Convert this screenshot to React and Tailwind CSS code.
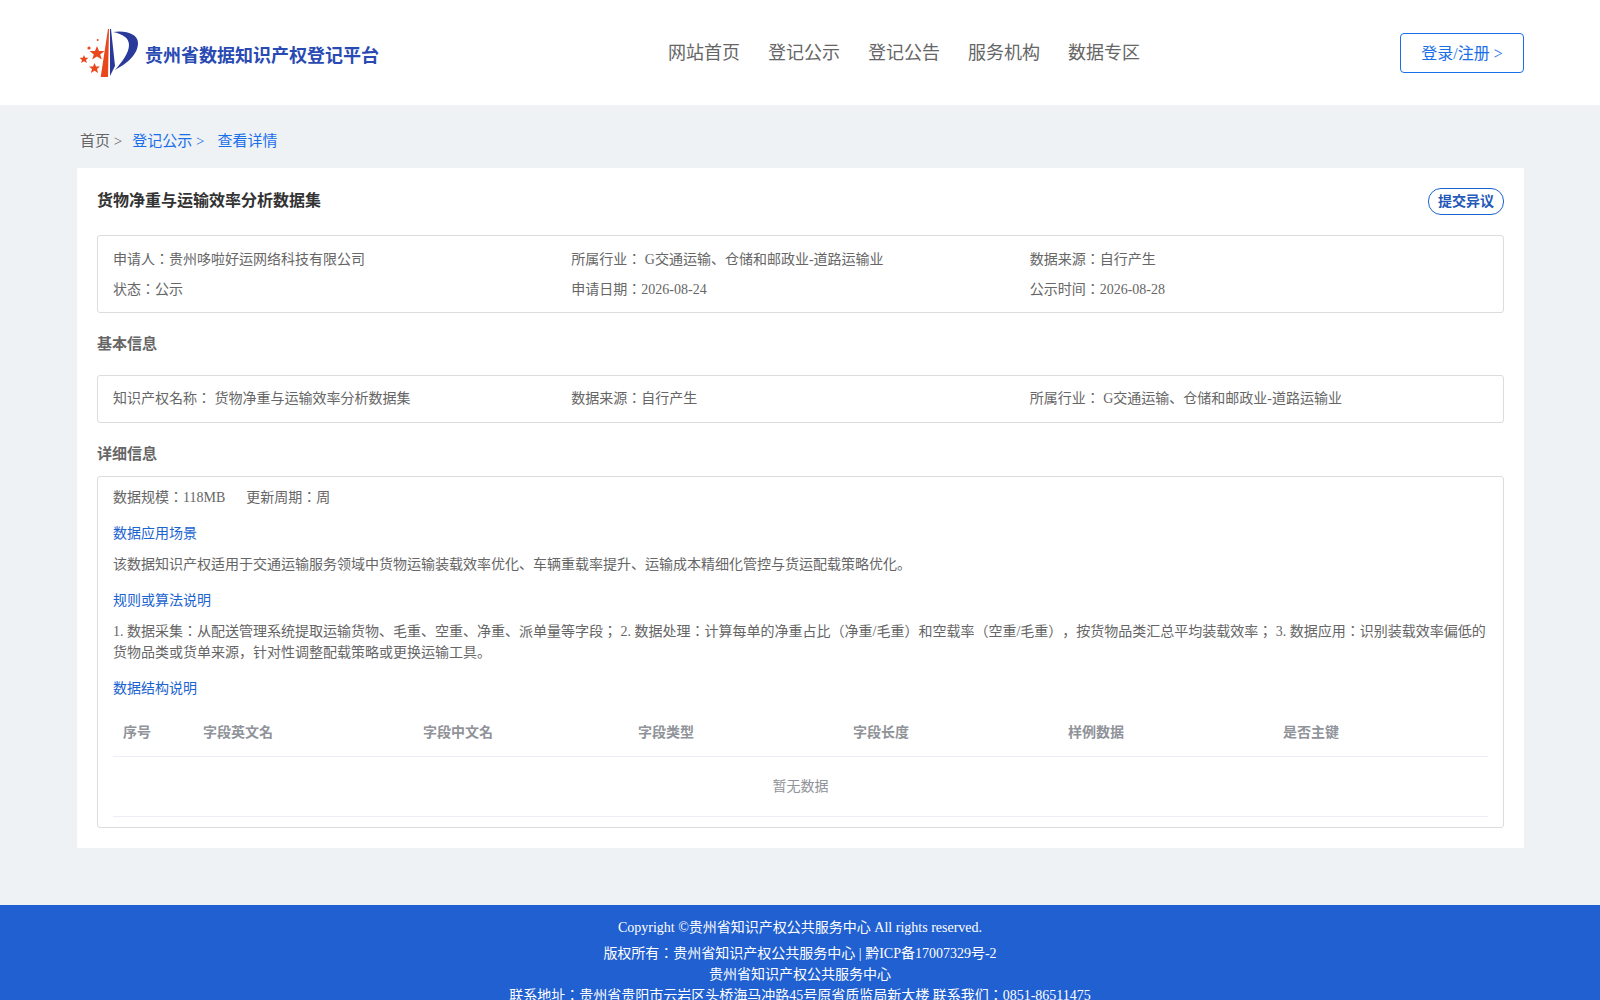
const columns = [
  { label: "序号", width: "w-[80px]" },
  { label: "字段英文名", width: "w-[220px]" },
  { label: "字段中文名", width: "w-[215px]" },
  { label: "字段类型", width: "w-[215px]" },
  { label: "字段长度", width: "w-[215px]" },
  { label: "样例数据", width: "w-[215px]" },
  { label: "是否主键", width: "w-[215px]" },
];

function Logo() {
  return (
    <svg width="58" height="50" viewBox="0 0 58 50" className="shrink-0">
      <path d="M20.7 49 L28 1 L29 1 L28 49 Z" fill="#e8481c" />
      <path d="M30 1 L31 1 L35 38 L30 48 Z" fill="#2a3a9a" />
      <path d="M33 4 C46 2 58 6 58 15 C58 27 46 36 35 42 C42 34 49 25 49 17 C49 10 43 6 33 4 Z" fill="#2a3a9a" />
      <path d="M17 18 L19 23 L24.5 23 L20.2 26.4 L21.8 31.5 L17 28.6 L12.2 31.5 L13.8 26.4 L9.5 23 L15 23 Z" fill="#e8481c" />
      <path d="M4 27 L5.2 29.8 L8.4 29.8 L6 31.9 L6.9 35 L4 33.2 L1.1 35 L2 31.9 L-0.4 29.8 L2.8 29.8 Z" fill="#e8481c" />
      <path d="M14.5 35 L16 38.5 L20 38.5 L17 41 L18.1 45 L14.5 42.7 L10.9 45 L12 41 L9 38.5 L13 38.5 Z" fill="#e8481c" />
      <circle cx="9" cy="20" r="1.6" fill="#e8481c" />
      <circle cx="17.7" cy="12" r="1" fill="#e8481c" />
    </svg>
  );
}

function Header() {
  return (
    <header className="flex h-[105px] items-center bg-white pl-[80px] pr-[76px]">
      <div className="flex w-[400px] items-center gap-[7px]">
        <Logo />
        <span className="pt-[7px] text-[18px] font-bold text-[#2a4ab3]">贵州省数据知识产权登记平台</span>
      </div>
      <nav className="ml-[188px] flex gap-[28px] pt-[1px] text-[18px] text-[#666]">
        <a>网站首页</a>
        <a>登记公示</a>
        <a>登记公告</a>
        <a>服务机构</a>
        <a>数据专区</a>
      </nav>
      <button className="ml-auto h-[40px] w-[124px] rounded-[4px] border border-[#1a6fe8] pt-[2px] text-[16px] text-[#1a6fe8]">
        登录/注册 &gt;
      </button>
    </header>
  );
}

function InfoBox({ children, className = "" }) {
  return (
    <div className={`rounded-[3px] border border-[#dcdcdc] px-[15px] text-[14px] text-[#666] ${className}`}>
      {children}
    </div>
  );
}

function SubTitle({ children }) {
  return <div className="px-[15px] text-[14px] leading-[21px] text-[#1a63d0]">{children}</div>;
}

export default function App() {
  return (
    <div className="min-h-screen bg-[#eff2f5] font-['Liberation_Serif','Noto_Sans_CJK_JP',serif] [text-spacing-trim:space-all]">
      <Header />

      <main className="pb-[57px] pl-[77px] pr-[76px]">
        <div className="flex h-[63px] items-center pl-[3px] pt-[10px] text-[15px] text-[#1a6fe8]">
          <span className="text-[#666]">首页 &gt;</span>
          <span className="ml-[10px]">登记公示 &gt;</span>
          <span className="ml-[13px]">查看详情</span>
        </div>

        <section className="bg-white p-[20px]">
          <div className="flex items-start justify-between">
            <h1 className="text-[16px] font-bold leading-[26px] text-[#333]">货物净重与运输效率分析数据集</h1>
            <button className="h-[27px] w-[76px] rounded-[13px] border border-[#1a63d0] text-[14px] font-bold text-[#2258b8]">
              提交异议
            </button>
          </div>

          <InfoBox className="mt-[20px] pb-[7px] pt-[9px]">
            <div className="grid grid-cols-3 leading-[30px]">
              <div>申请人：贵州哆啦好运网络科技有限公司</div>
              <div>所属行业： G交通运输、仓储和邮政业-道路运输业</div>
              <div>数据来源：自行产生</div>
              <div>状态：公示</div>
              <div>申请日期：2026-08-24</div>
              <div>公示时间：2026-08-28</div>
            </div>
          </InfoBox>

          <h2 className="mt-[19px] text-[15px] font-bold leading-[24px] text-[#666]">基本信息</h2>

          <InfoBox className="mt-[19px] py-[8px]">
            <div className="grid grid-cols-3 leading-[30px]">
              <div>知识产权名称： 货物净重与运输效率分析数据集</div>
              <div>数据来源：自行产生</div>
              <div>所属行业： G交通运输、仓储和邮政业-道路运输业</div>
            </div>
          </InfoBox>

          <h2 className="mt-[19px] text-[15px] font-bold leading-[24px] text-[#666]">详细信息</h2>

          <div className="mt-[10px] rounded-[3px] border border-[#dcdcdc] pb-[10px] text-[14px] text-[#666]">
            <div className="flex gap-[21px] px-[15px] pt-[10px] leading-[21px]">
              <span>数据规模：118MB</span>
              <span>更新周期：周</span>
            </div>

            <div className="mt-[15px]"><SubTitle>数据应用场景</SubTitle></div>
            <p className="mt-[10px] px-[15px] leading-[21px]">
              该数据知识产权适用于交通运输服务领域中货物运输装载效率优化、车辆重载率提升、运输成本精细化管控与货运配载策略优化。
            </p>

            <div className="mt-[15px]"><SubTitle>规则或算法说明</SubTitle></div>
            <p className="mt-[10px] px-[15px] leading-[21px]">
              1. 数据采集：从配送管理系统提取运输货物、毛重、空重、净重、派单量等字段； 2. 数据处理：计算每单的净重占比（净重/毛重）和空载率（空重/毛重），按货物品类汇总平均装载效率； 3. 数据应用：识别装载效率偏低的货物品类或货单来源，针对性调整配载策略或更换运输工具。
            </p>

            <div className="mt-[15px]"><SubTitle>数据结构说明</SubTitle></div>

            <div className="mx-[15px] mt-[10px]">
              <div className="flex h-[48px] items-center border-b border-[#ebeef5] text-[14px] font-bold text-[#909399]">
                {columns.map((col) => (
                  <div key={col.label} className={`${col.width} px-[10px]`}>{col.label}</div>
                ))}
              </div>
              <div className="flex h-[60px] items-center justify-center border-b border-[#ebeef5] text-[14px] text-[#909399]">
                暂无数据
              </div>
            </div>
          </div>
        </section>
      </main>

      <footer className="bg-[#2160d0] pb-[4px] pt-[12px] text-center text-[14px] text-white">
        <div className="leading-[21px]">Copyright ©贵州省知识产权公共服务中心 All rights reserved.</div>
        <div className="mt-[5px] leading-[21px]">版权所有：贵州省知识产权公共服务中心 | 黔ICP备17007329号-2</div>
        <div className="leading-[21px]">贵州省知识产权公共服务中心</div>
        <div className="leading-[21px]">联系地址：贵州省贵阳市云岩区头桥海马冲路45号原省质监局新大楼 联系我们：0851-86511475</div>
      </footer>
    </div>
  );
}
